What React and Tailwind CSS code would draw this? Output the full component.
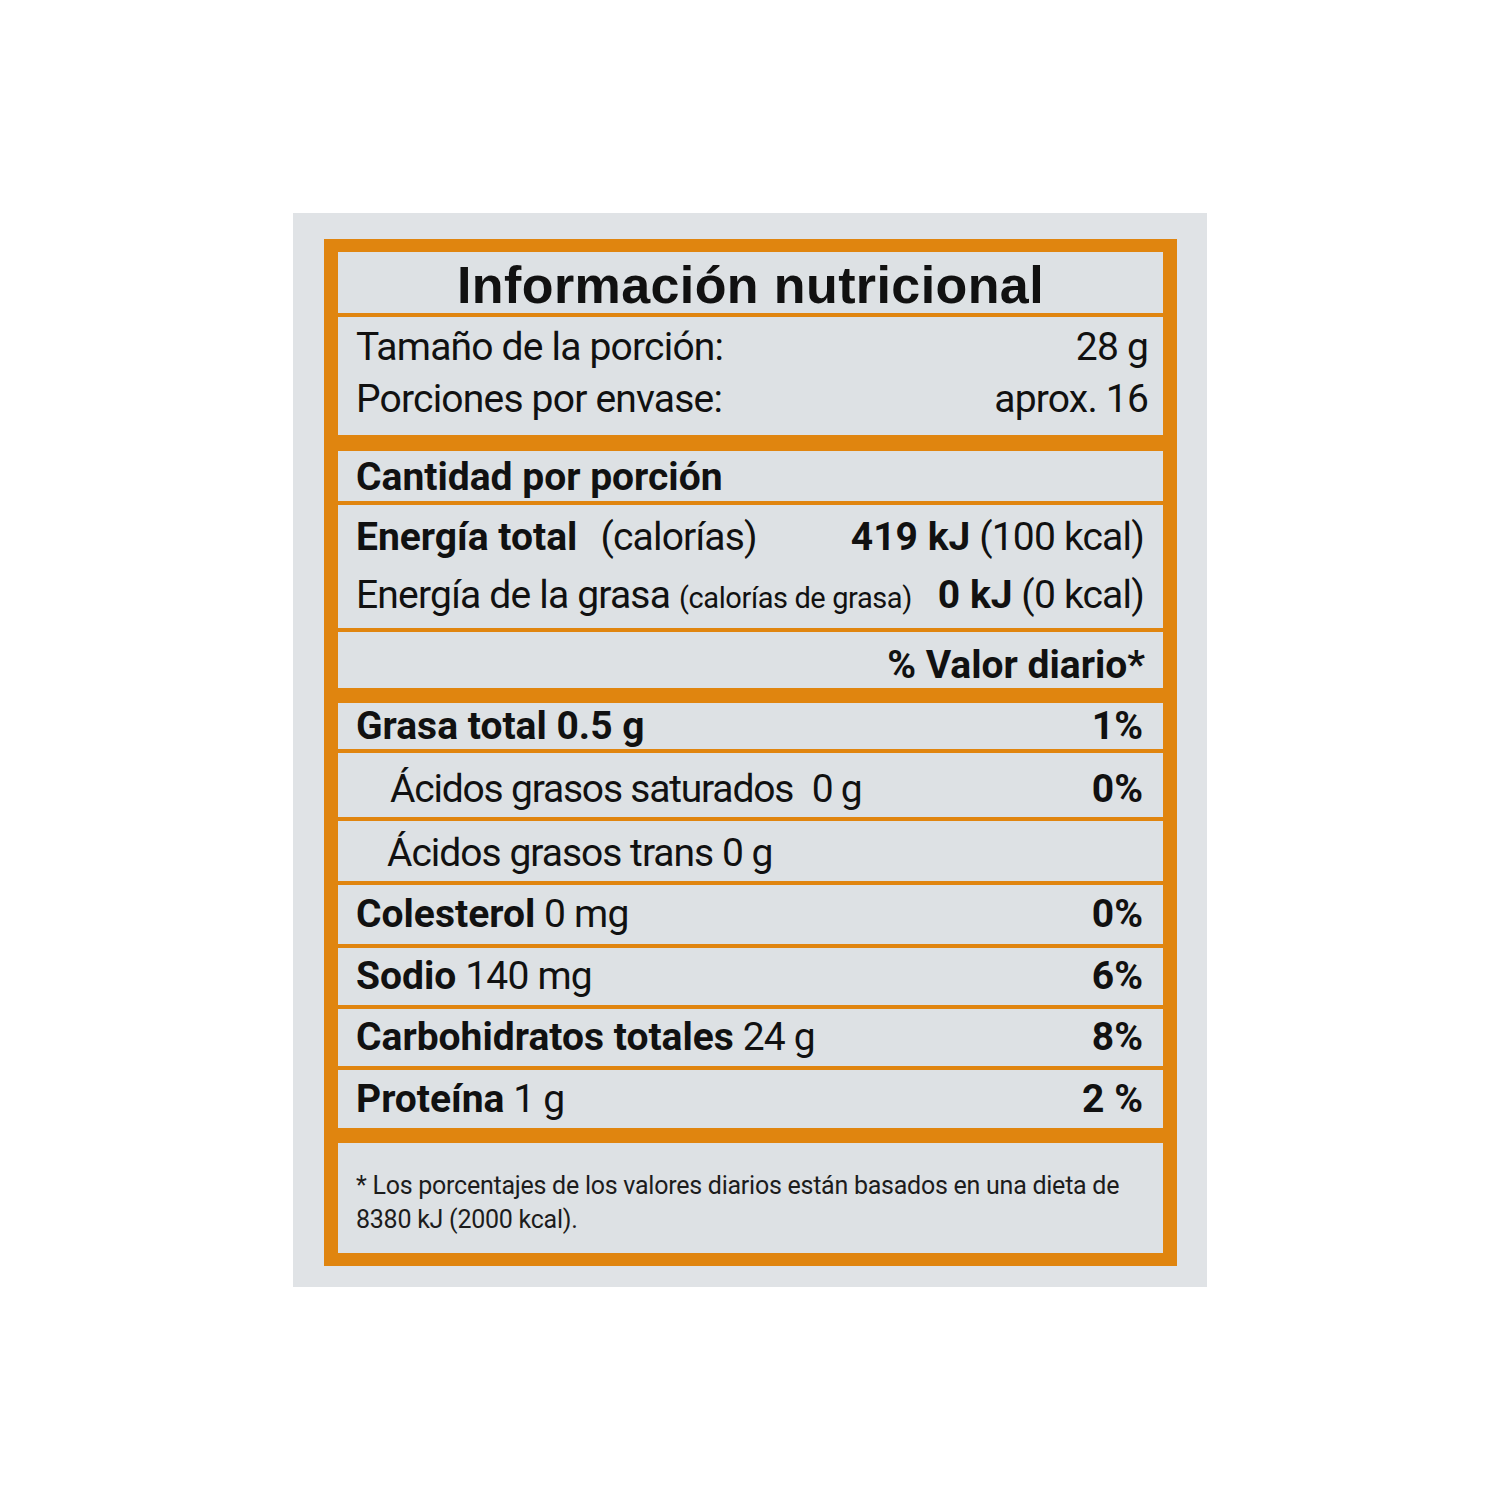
const orange = 'border-[#e0850f]';

function Line({ children, className = '' }) {
  return <div className={`flex items-center justify-between border-b-4 ${orange} ${className}`}>{children}</div>;
}

function B({ children }) {
  return <span className="font-bold tracking-[0px]">{children}</span>;
}

export default function App() {
  return (
    <div className="flex min-h-[1500px] justify-center bg-white pt-[213px]">
      <div className="h-[1074px] w-[914px] bg-[#e0e3e6] pb-[21px] pl-[31px] pr-[30px] pt-[26px]">
        <div
          className={`border-x-[14px] border-y-[13px] ${orange} bg-[#dde1e4] text-[39px] leading-none tracking-[-0.8px] text-[#111]`}
          style={{ fontFamily: 'Roboto, "Liberation Sans", sans-serif' }}
        >
          {/* titulo */}
          <div className={`flex h-[65px] items-start justify-center border-b-4 pt-[7px] ${orange}`}>
            <h1 className="font-['Liberation_Sans',Arial,sans-serif] text-[52px] font-bold tracking-[0.4px]">
              Información nutricional
            </h1>
          </div>

          {/* porcion */}
          <div className={`h-[134px] border-b-[16px] pl-[18px] pr-[15px] pt-[4px] ${orange}`}>
            <div className="flex h-[52px] items-center justify-between">
              <span>Tamaño de la porción:</span>
              <span>28 g</span>
            </div>
            <div className="flex h-[52px] items-center justify-between">
              <span>Porciones por envase:</span>
              <span>aprox. 16</span>
            </div>
          </div>

          <Line className="h-[54px] pl-[18px] pt-[2px]">
            <B>Cantidad por porción</B>
          </Line>

          {/* energia */}
          <div className={`h-[127px] border-b-4 pl-[18px] pr-[19px] pt-[3px] ${orange}`}>
            <div className="flex h-[58px] items-center justify-between">
              <span>
                <B>Energía total</B>
                <span className="ml-[23px]">(calorías)</span>
              </span>
              <span>
                <B>419 kJ</B> (100 kcal)
              </span>
            </div>
            <div className="flex h-[58px] items-center justify-between">
              <span>
                Energía de la grasa{' '}
                <span className="text-[29px] tracking-[-0.4px]">(calorías de grasa)</span>
              </span>
              <span>
                <B>0 kJ</B> (0 kcal)
              </span>
            </div>
          </div>

          <div className={`flex h-[71px] items-start justify-end border-b-[15px] pr-[18px] pt-[14px] ${orange}`}>
            <B>% Valor diario*</B>
          </div>

          {/* nutrientes */}
          <Line className="h-[50px] pl-[18px] pr-[20px]">
            <B>Grasa total 0.5 g</B>
            <B>1%</B>
          </Line>
          <Line className="h-[68px] pl-[52px] pr-[20px] pt-[8px]">
            <span className="tracking-[-1.2px]">
              Ácidos grasos saturados <span className="ml-[10px]">0 g</span>
            </span>
            <B>0%</B>
          </Line>
          <Line className="h-[64px] pl-[49px] pr-[20px] pt-[4px]">
            <span className="tracking-[-1px]">Ácidos grasos trans 0 g</span>
          </Line>
          <Line className="h-[63px] pl-[18px] pr-[20px]">
            <span>
              <B>Colesterol</B> 0 mg
            </span>
            <B>0%</B>
          </Line>
          <Line className="h-[61px] pl-[18px] pr-[20px]">
            <span>
              <B>Sodio</B> 140 mg
            </span>
            <B>6%</B>
          </Line>
          <Line className="h-[61px] pl-[18px] pr-[20px]">
            <span>
              <B>Carbohidratos totales</B> 24 g
            </span>
            <B>8%</B>
          </Line>
          <div className={`flex h-[73px] items-center justify-between border-b-[15px] pl-[18px] pr-[20px] ${orange}`}>
            <span>
              <B>Proteína</B> 1 g
            </span>
            <B>2 %</B>
          </div>

          {/* nota */}
          <div className="h-[110px] pl-[18px] pt-[26px] text-[25px] leading-[34px] tracking-[-0.25px] text-[#1c1c1c]">
            <p className="whitespace-nowrap">* Los porcentajes de los valores diarios están basados en una dieta de</p>
            <p className="whitespace-nowrap">8380 kJ (2000 kcal).</p>
          </div>
        </div>
      </div>
    </div>
  );
}
